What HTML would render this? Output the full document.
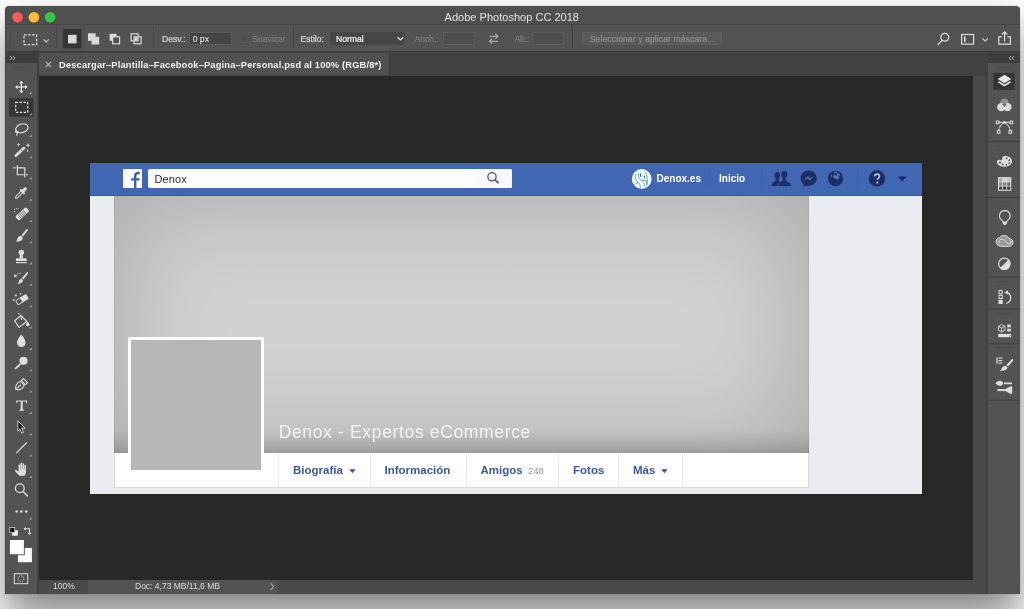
<!DOCTYPE html>
<html><head><meta charset="utf-8">
<style>
*{box-sizing:border-box;margin:0;padding:0}
html,body{width:1024px;height:609px;overflow:hidden}
body{position:relative;background:#fff;font-family:"Liberation Sans",sans-serif;}
.abs{position:absolute}
#win{position:absolute;left:5px;top:6px;width:1015px;height:588px;background:#484848;border-radius:4.5px 4.5px 0 0;box-shadow:0 0 1px rgba(0,0,0,.55),0 23px 40px rgba(0,0,0,.48);overflow:hidden}
#in{position:absolute;left:-5px;top:-6px;width:1024px;height:609px;will-change:transform}
#in2{position:absolute;left:5.5px;top:6px;width:1014px;height:587.5px}
#in2>*{position:absolute}
#title{left:0;top:0;width:100%;height:18px;background:#505050;color:#e2e2e2;font-size:11px;text-align:center;line-height:22.6px;letter-spacing:.02px;text-indent:-1.4px}
#opts{left:0;top:18px;width:100%;height:28px;background:#535353;border-top:1px solid #444;border-bottom:1px solid #3e3e3e}
#tabbar{left:33px;top:46px;width:950px;height:24.3px;background:#414141}
#tab{left:33.5px;top:46.5px;width:350.5px;height:22.7px;background:#515151;border-right:1px solid #3a3a3a;color:#f0f0f0;font-size:9.3px;letter-spacing:.17px;font-weight:bold;line-height:24.8px;white-space:nowrap}
#canvas{left:33px;top:70.3px;width:934.5px;height:503.7px;background:#282828}
#vscroll{left:967.5px;top:70.3px;width:13px;height:517.2px;background:#4a4a4a}
#vsep{left:980.3px;top:46px;width:2.4px;height:542px;background:#414141}
#status{left:33px;top:574px;width:934.5px;height:13.5px;background:#4a4a4a;color:#dadada;font-size:8.5px;line-height:12.8px}
#tools{left:0;top:46px;width:33px;height:542px;background:#535353;border-right:2.3px solid #3f3f3f}
#rpanel{left:982.5px;top:46px;width:32px;height:542px;background:#535353}
.hdr{position:absolute;left:0;top:0;width:100%;height:10.5px;background:#3d3d3d}

#doc{left:84.5px;top:156.5px;width:832px;height:331.5px;background:#e9ebee}
#doc>*{position:absolute}
#fbbar{left:0;top:0;width:100%;height:33.5px;background:#4267b2;border-bottom:1px solid #3b5998}
#fblogo{left:32.9px;top:6.2px;width:19.6px;height:19.4px;background:#fff;border-radius:1px}
#search{left:58px;top:6.3px;width:364px;height:19.5px;background:#fff;border-radius:2px;overflow:hidden;font-size:11px;letter-spacing:.1px;color:#1d2129;line-height:20.9px;padding-left:6.5px}
#sbtn{position:absolute;right:0;top:0;width:37px;height:19.5px;background:#f8f9fa}
#cover{left:24px;top:33.5px;width:695px;height:257px;background:#d1d1d1;box-shadow:inset 0 0 110px rgba(0,0,0,.2),inset 1px 0 0 rgba(0,0,0,.06),inset -1px 0 0 rgba(0,0,0,.06)}
#covshade{left:24px;top:266.5px;width:695px;height:24px;background:linear-gradient(to bottom,rgba(0,0,0,0) 0%,rgba(0,0,0,.035) 30%,rgba(0,0,0,.1) 70%,rgba(0,0,0,.17) 100%)}
#tabs{left:24px;top:290.3px;width:695px;height:35.5px;background:#fff;border:1px solid #d8dade;border-top:none}
#pic{left:37.7px;top:174.2px;width:136.4px;height:137.3px;background:#fff;border-radius:1.5px}
#pic i{position:absolute;left:3.5px;top:3.6px;right:3.2px;bottom:3.6px;background:#b7b7b7}
#name{left:188.7px;top:259.4px;font-size:17.5px;color:rgba(255,255,255,.8);white-space:nowrap;letter-spacing:.65px;font-weight:normal}
.tb{position:absolute;top:290.3px;height:35px;line-height:35.5px;font-size:11.5px;font-weight:bold;color:#3c5894;white-space:nowrap}
.ts{position:absolute;top:290.3px;width:1px;height:35px;background:#e5e6e9}
.nv{position:absolute;top:-.8px;height:33.5px;line-height:33px;font-size:10px;font-weight:bold;color:#fff;white-space:nowrap}

#ov{left:-5.5px;top:-6px;width:1024px;height:609px;pointer-events:none}
#ov>*{position:absolute}
.ot{-webkit-text-stroke-width:.22px;position:absolute;top:32.6px;height:13px;line-height:13px;font-size:8.6px;color:#d6d6d6;white-space:nowrap}
.dim{color:#7d7d7d}
.inp{position:absolute;top:32.4px;height:12.4px;background:#454545;border:1px solid #5d5d5d;border-radius:1px}
.inpd{position:absolute;top:32.4px;height:12.4px;background:#4d4d4d;border:1px solid #5e5e5e;border-radius:1px}
</style></head><body>
<div id="win"><div id="in"><div id="in2">
  <div id="title">Adobe Photoshop CC 2018</div>
  <div id="opts"></div>
  <div id="tabbar"></div>
  <div id="tab"><svg class="abs" style="left:5.500px;top:8px" width="7" height="7" viewBox="0 0 7 7"><path d="M.8.800l5.200 5.200M6 .8l-5.200 5.200" stroke="#b4b4b4" stroke-width="1.100"/></svg><span class="abs" style="left:20px">Descargar–Plantilla–Facebook–Pagina–Personal.psd al 100% (RGB/8*)</span></div>
  <div id="canvas"></div>

  <div id="doc">
    <div id="fbbar"></div>
    <div id="fblogo"><svg width="19.6" height="19.4" viewBox="0 0 19.6 19.4" style="position:absolute;left:0;top:0"><path d="M11 19.400V11.600H8.100V9.200H11V6.900C11 4.200 12.600 2.800 15 2.800C15.800 2.800 16.400 2.900 16.900 3V5.300H15.500C14 5.300 13.400 5.900 13.400 7.200V9.200H16.600L16.300 11.600H13.400V19.400Z" fill="#3d5fa8"/></svg></div>
    <div id="search">Denox<div id="sbtn"><svg width="37" height="19" viewBox="0 0 37 19" style="position:absolute;left:0;top:0"><circle cx="17" cy="7.800" r="4.150" fill="none" stroke="#4b4f56" stroke-width="1.250"/><path d="M20 10.800l3.100 2.900" stroke="#4b4f56" stroke-width="1.600" stroke-linecap="round"/></svg></div></div>
    <div id="cover"></div>
    <div id="covshade"></div>
    <div id="tabs"></div>
    <div id="name">Denox - Expertos eCommerce</div>
    <div id="pic"><i></i></div>
    <div class="ts" style="left:188px"></div>
    <div class="tb" style="left:203px">Biografía</div>
    <div class="ts" style="left:279.5px"></div>
    <div class="tb" style="left:294.5px">Información</div>
    <div class="ts" style="left:375.5px"></div>
    <div class="tb" style="left:390.5px">Amigos <span style="font-weight:normal;font-size:9.5px;color:#90949c;margin-left:2px">248</span></div>
    <div class="ts" style="left:468px"></div>
    <div class="tb" style="left:483px">Fotos</div>
    <div class="ts" style="left:527.5px"></div>
    <div class="tb" style="left:543px">Más</div>
    <div class="ts" style="left:592px"></div>
    <svg class="abs" style="left:259px;top:306.2px" width="7" height="5" viewBox="0 0 7 5"><path d="M.2.300h6.400L3.400 4.200z" fill="#3c5894"/></svg>
    <svg class="abs" style="left:571.3px;top:306.2px" width="7" height="5" viewBox="0 0 7 5"><path d="M.2.300h6.400L3.400 4.200z" fill="#3c5894"/></svg>
    <svg class="abs" style="left:0;top:0" width="832" height="33.5" viewBox="0 0 832 33.5">
      <g stroke="#3d60a8" stroke-width="1"><path d="M619.300 6v17.500M671.600 6v17.500M767.600 6v17.500"/></g>
      <!-- avatar -->
      <circle cx="551.7" cy="16" r="9.900" fill="#f1f9ff"/>
      <g fill="none" stroke="#5b8fc6" stroke-width=".8" stroke-linecap="round">
        <path d="M545.500 11.500c-1 3 0 6 3 8.500c1.500 1.200 2 3 1.800 5.200"/>
        <path d="M548.300 10.500c-.5 3 .8 5.500 3.500 7c2 1.200 2.600 3 2.400 5.500"/>
        <path d="M544 21.500l4.500-2.200"/>
        <path d="M554.500 8.500c2 1.500 3 4 2.600 7.500l.3 5"/>
        <path d="M552.500 17.500h4v5"/>
      </g>
      <path d="M550.200 9.800c-.8 1.600-.5 3.600.9 4.600c.2-1.600.2-3.200-.9-4.600zM554.200 12.300c-.5 1.300-.2 2.800.8 3.600c.3-1.300.1-2.600-.8-3.600z" fill="#1c6f9c"/>
      <!-- friends -->
      <g fill="#1b2f66">
        <ellipse cx="687.2" cy="12.200" rx="2.650" ry="3.100"/>
        <path d="M681.700 23.400C681.700 20.600 682.300 19.300 684.300 18.500C685.500 18 685.600 17.600 685.600 16.900V14H688.900V16.900C688.900 17.600 689.100 18 690.300 18.500L692.500 23.400Z"/>
        <path d="M688.200 23.600C688.200 20.700 688.900 19.300 691 18.500C692.300 18 692.500 17.600 692.500 16.800V14H696V16.800C696 17.600 696.200 18 697.500 18.500C699.800 19.300 701.300 20.700 701.300 23.600Z" stroke="#4267b2" stroke-width=".6"/>
        <ellipse cx="694.2" cy="11.500" rx="2.950" ry="3.450"/>
        <rect x="681" y="23.100" width="21" height="1.200" fill="#4267b2"/>
      </g>
      <!-- messenger -->
      <g>
        <path d="M718.700 7.600c-4.500 0-8.100 3.400-8.100 7.600c0 2.400 1.200 4.500 3 5.900v3l2.800-1.600c.7.200 1.500.3 2.300.3c4.500 0 8.100-3.400 8.100-7.600s-3.600-7.600-8.100-7.600z" fill="#1b2f66"/>
        <path d="M713.600 17.700l4.300-4.600l2.100 2.200l4-2.200l-4.300 4.600l-2.100-2.200z" fill="#4a6fb8"/>
      </g>
      <!-- globe -->
      <circle cx="745.5" cy="15.500" r="7.700" fill="#1b2f66"/>
      <g fill="#5477be">
        <path d="M743.600 9.200l2.200-.6l1.800.5l-1.200.9l-1.600-.1l-.8.700z"/>
        <path d="M746.800 10.600l1.800-.4l1.300 1.200l.2 1.400l-1.500-.5l-1.300.6l-.9-.9z"/>
        <path d="M743.300 12.600l1.600-.6l1.700.8l1.800.2l.9 1.400l-.7 1.600l-1.700.5l-1.100-1l-1.700-.3l-1-1.300z"/>
        <path d="M741.300 11.200l.9.900l-.4 1.400l-1.100.3z"/>
      </g>
      <!-- help -->
      <circle cx="787" cy="15.500" r="8.200" fill="#1b2f66"/>
      <path d="M784.700 13.500c0-1.400 1-2.400 2.400-2.400s2.400.9 2.400 2.200c0 1-.6 1.600-1.300 2.100c-.6.400-.9.800-.9 1.500" fill="none" stroke="#b4c3e4" stroke-width="1.600"/>
      <circle cx="787.300" cy="19.600" r="1.050" fill="#b4c3e4"/>
      <!-- caret -->
      <path d="M807.600 13.400h9.300l-4.650 5.200z" fill="#1b2f66"/>
    </svg>
    <div class="nv" style="left:566.5px">Denox.es</div>
    <div class="nv" style="left:629px">Inicio</div>
  </div>
  <div id="vscroll"></div>
  <div id="vsep"></div>
  <div id="status"><div class="abs" style="left:49.3px;top:0;width:190.7px;height:13.5px;background:#535353"></div><span class="abs" style="left:14.5px">100%</span><span class="abs" style="left:96.5px">Doc: 4,73 MB/11,6 MB</span></div>
  <div id="tools"><div class="hdr"></div></div>
  <div id="rpanel"><div class="hdr"></div></div>
  <div id="ov">
    <svg style="left:0;top:0" width="60" height="609" viewBox="0 0 60 609">
      <!-- traffic lights -->
      <circle cx="17.6" cy="17.200" r="5.300" fill="#fc5b57"/><circle cx="33.900" cy="17.200" r="5.300" fill="#fdbc40"/><circle cx="50.200" cy="17.200" r="5.300" fill="#34c84a"/>
      <path d="M10 56l2.100 2.100l-2.100 2.100M12.900 56l2.100 2.100l-2.100 2.100" fill="none" stroke="#c8c8c8" stroke-width=".85"/>
      <path d="M13 67.200h16.500" stroke="#494949" stroke-width="1.600" stroke-dasharray="1 1"/>
      <!-- move -->
      <g transform="translate(21.300 87)" fill="#dedede" stroke="none">
        <rect x="-.7" y="-4.500" width="1.400" height="9"/><rect x="-4.500" y="-.7" width="9" height="1.400"/>
        <path d="M0 -6.300l2.300 2.500h-4.600zM0 6.300l2.300-2.500h-4.600zM-6.300 0l2.500-2.300v4.600zM6.300 0l-2.500-2.300v4.600z"/>
      </g><path d="M31.600 91.7v2.300h-2.300z" fill="#b5b5b5"/>
      <!-- marquee (selected) -->
      <rect x="9.100" y="98.200" width="24.300" height="18.500" fill="#363636"/>
      <rect x="15.700" y="102.400" width="12" height="9.900" fill="none" stroke="#dedede" stroke-width="1.200" stroke-dasharray="2.500 1.400"/><path d="M31.600 113.0v2.300h-2.300z" fill="#b5b5b5"/>
      <!-- lasso -->
      <g fill="none" stroke="#dedede" stroke-width="1.150">
        <ellipse cx="21.900" cy="128.300" rx="6.300" ry="4.300" transform="rotate(-18 21.900 128.300)"/>
        <path d="M16.300 130.500c-1 .6-.9 2 .3 2.200c1.200.2 1.800-.9 1.100-1.700M17 132.700c.3 1 .2 2-.4 3"/>
      </g><path d="M31.600 134.7v2.300h-2.300z" fill="#b5b5b5"/>
      <!-- magic wand -->
      <g>
        <path d="M16 155.600l8-7.500" stroke="#dedede" stroke-width="2.700" stroke-linecap="round"/>
        <path d="M20.900 149.400l1.900 2" stroke="#5a5a5a" stroke-width=".8"/>
        <g fill="#dedede"><path d="M28 143.0l0.644 1.6559999999999997l1.6559999999999997 0.644l-1.6559999999999997 0.644l-0.644 1.6559999999999997l-0.644 -1.6559999999999997l-1.6559999999999997 -0.644l1.6559999999999997 -0.644z"/><path d="M18.6 142.79999999999998l0.5040000000000001 1.2959999999999998l1.2959999999999998 0.5040000000000001l-1.2959999999999998 0.5040000000000001l-0.5040000000000001 1.2959999999999998l-0.5040000000000001 -1.2959999999999998l-1.2959999999999998 -0.5040000000000001l1.2959999999999998 -0.5040000000000001z"/><path d="M27.6 149.3l0.42000000000000004 1.08l1.08 0.42000000000000004l-1.08 0.42000000000000004l-0.42000000000000004 1.08l-0.42000000000000004 -1.08l-1.08 -0.42000000000000004l1.08 -0.42000000000000004z"/></g>
      </g><path d="M31.600 156.0v2.300h-2.300z" fill="#b5b5b5"/>
      <!-- crop -->
      <g fill="none" stroke="#dedede" stroke-width="1.150"><path d="M17.300 165.200v9.500h7.500M25.900 174.700h2.200"/><path d="M13.200 167.900h2.300M16.700 167.900h8.100v9.500"/></g><path d="M31.600 177.0v2.300h-2.300z" fill="#b5b5b5"/>
      <!-- eyedropper -->
      <g>
        <path d="M15.600 198.300l.3-2l5.300-5.300l1.700 1.700l-5.300 5.300z" fill="none" stroke="#dedede" stroke-width="1.050" stroke-linejoin="round"/>
        <path d="M20.600 189.800l3.600 3.600" stroke="#dedede" stroke-width="1.800" stroke-linecap="round"/>
        <path d="M23 191.200l2.300-2.300" stroke="#dedede" stroke-width="3.200" stroke-linecap="round"/>
      </g><path d="M31.600 198.5v2.300h-2.300z" fill="#b5b5b5"/>
      <!-- healing brush -->
      <g>
        <g transform="rotate(-42 22.200 213.800)"><rect x="15" y="211" width="14.400" height="5.600" rx="1.600" fill="#dedede"/><path d="M18.600 211v5.600M20.300 211v5.600M22 211v5.600M23.700 211v5.600M25.400 211v5.600" stroke="#555" stroke-width=".7"/></g>
        <path d="M14.600 212.300v-2.800c0-.6.300-.9.900-.9h3.300" fill="none" stroke="#dedede" stroke-width=".9" stroke-dasharray="1.300 1"/>
      </g><path d="M31.600 219.7v2.300h-2.300z" fill="#b5b5b5"/>
      <!-- brush -->
      <g fill="#dedede">
        <path d="M27.500 228.900c.5.400.5 1 .1 1.500l-4.600 6.100l-1.600-1.300l5-5.900c.4-.5.700-.7 1.100-.4z"/>
        <path d="M20.800 235.800l1.700 1.400c.6 1.600-.3 3-2 3.700c-1.400.6-2.900.7-4.600.7c1-1 1.100-1.900 1.600-3.100c.6-1.500 1.800-2.500 3.300-2.700z"/>
      </g><path d="M31.600 241.0v2.300h-2.300z" fill="#b5b5b5"/>
      <!-- stamp -->
      <g fill="#dedede">
        <circle cx="21.300" cy="252.500" r="2.750"/>
        <path d="M20.100 254.500h2.400l.7 3.800h-3.800z"/>
        <path d="M16.900 258.200h8.800c.6 0 1 .4 1 1v1.700h-10.800v-1.700c0-.6.400-1 1-1z"/>
        <rect x="15.900" y="262" width="10.800" height="1.200"/>
      </g><path d="M31.600 262.3v2.300h-2.300z" fill="#b5b5b5"/>
      <!-- history brush -->
      <g>
        <g fill="#dedede"><path d="M27.800 272.100c.5.400.4 1 0 1.500l-4.300 5.800l-1.600-1.300l4.800-5.700c.4-.4.700-.6 1.100-.3z"/><path d="M21.200 278.800l1.700 1.400c0 1.700-1.500 3.300-5.300 3.900c1.300-1.300 1-2.300 1.500-3.500c.4-.9 1.100-1.600 2.100-1.800z"/></g>
        <path d="M16.800 275c1.100-1.300 2.500-1.900 4.300-1.700" fill="none" stroke="#dedede" stroke-width=".9" stroke-dasharray="1.200 .9"/><path d="M14 277.400l.6-3.300l2.800 1.900z" fill="#dedede"/>
      </g><path d="M31.600 283.5v2.300h-2.300z" fill="#b5b5b5"/>
      <!-- eraser w/ sparkles -->
      <g>
        <g transform="rotate(-32 22 299.600)"><rect x="15.600" y="296.800" width="12.800" height="5.600" rx=".8" fill="#dedede"/><rect x="16.400" y="297.600" width="4.600" height="4" fill="#535353"/></g>
        <g fill="#dedede"><path d="M15.9 293.8l0.47600000000000003 1.224l1.224 0.47600000000000003l-1.224 0.47600000000000003l-0.47600000000000003 1.224l-0.47600000000000003 -1.224l-1.224 -0.47600000000000003l1.224 -0.47600000000000003z"/><path d="M20.4 292.40000000000003l0.392 1.008l1.008 0.392l-1.008 0.392l-0.392 1.008l-0.392 -1.008l-1.008 -0.392l1.008 -0.392z"/><path d="M13.8 298.6l0.392 1.008l1.008 0.392l-1.008 0.392l-0.392 1.008l-0.392 -1.008l-1.008 -0.392l1.008 -0.392z"/></g>
      </g><path d="M31.600 304.9v2.300h-2.300z" fill="#b5b5b5"/>
      <!-- paint bucket -->
      <g>
        <path d="M14.600 320.800l6.300-5.300l6 5.800l-7.800 6.100z" fill="none" stroke="#dedede" stroke-width="1.150" stroke-linejoin="round"/>
        <path d="M17.800 313.800c1.200-.5 2.300.2 2.800 1.500l.9 4" fill="none" stroke="#dedede" stroke-width="1"/>
        <path d="M27.600 321.500c1.300 1.600 1.900 2.500 1.900 3.300a1.700 1.700 0 0 1-3.400 0c0-.9.500-1.900 1.500-3.300z" fill="#dedede"/>
        <circle cx="21.500" cy="319.500" r=".8" fill="#dedede"/>
      </g><path d="M31.600 326.3v2.300h-2.300z" fill="#b5b5b5"/>
      <!-- blur drop -->
      <path d="M21.300 334.400c2.700 3.300 4.300 5.900 4.300 8.400a4.300 4.300 0 0 1-8.600 0c0-2.500 1.600-5.100 4.300-8.400z" fill="#dedede"/><path d="M31.600 347.7v2.300h-2.300z" fill="#b5b5b5"/>
      <!-- dodge -->
      <g><circle cx="23.500" cy="360.800" r="4.050" fill="#dedede"/><path d="M20.600 363.900l-4.900 4.500" stroke="#dedede" stroke-width="1.900" stroke-linecap="round"/><path d="M19.800 363.400l1.400 1.500" stroke="#666" stroke-width=".6"/></g><path d="M31.600 369.0v2.300h-2.300z" fill="#b5b5b5"/>
      <!-- pen -->
      <g transform="translate(15.800 389.600) rotate(-43)" fill="none" stroke="#dedede" stroke-width="1.050" stroke-linejoin="round">
        <path d="M0 0C2.200-3.400 6-3.900 9.200-2.700V2.700C6 3.900 2.200 3.400 0 0Z"/>
        <path d="M.5 0H5.300"/><circle cx="6.100" cy="0" r=".9" fill="#dedede" stroke="none"/>
        <rect x="10.300" y="-2.900" width="3" height="5.800" rx=".5"/>
      </g><path d="M31.600 390.3v2.300h-2.300z" fill="#b5b5b5"/>
      <!-- type -->
      <path d="M16.300 400.400h10.800v2.900h-.8c-.2-1.400-.7-1.800-1.900-1.800h-1.700v7.300c0 .8.300 1.100 1.600 1.100v.8h-5.200v-.8c1.300 0 1.600-.3 1.600-1.100v-7.300h-1.700c-1.200 0-1.700.4-1.900 1.800h-.8z" fill="#dedede"/><path d="M31.600 411.7v2.300h-2.300z" fill="#b5b5b5"/>
      <!-- path selection -->
      <path d="M17.800 420.800l7.400 7.300h-3.600l2 4.200l-1.800.8l-2-4.200l-2 2.300z" fill="#1a1a1a" stroke="#dedede" stroke-width=".9" stroke-linejoin="round"/><path d="M31.600 433.0v2.300h-2.300z" fill="#b5b5b5"/>
      <!-- line -->
      <path d="M16.300 453l10.500-10.500" stroke="#dedede" stroke-width="1.100"/><path d="M31.600 454.3v2.300h-2.300z" fill="#b5b5b5"/>
      <!-- hand -->
      <g transform="translate(21.500 0) scale(1.180 1) translate(-21.100 -.5)"><path d="M19.300 476.300c-1.300-1.800-2.500-3.300-3.500-4.400c-.6-.7.300-1.700 1.100-1.100l1.700 1.500v-6.800c0-.9 1.300-.9 1.300 0v4.400h.3v-6.200c0-.9 1.400-.9 1.400 0v6.200h.3v-5.500c0-.9 1.400-.9 1.400 0v5.600h.3v-4c0-.9 1.300-.9 1.300 0v6.300c0 1.800-.5 2.800-1.200 4z" fill="#dedede"/></g><path d="M31.600 475.7v2.300h-2.300z" fill="#b5b5b5"/>
      <!-- zoom -->
      <g fill="none" stroke="#dedede" stroke-width="1.300"><circle cx="19.800" cy="488.200" r="4.400"/><path d="M23 491.500l4.500 4.500" stroke-linecap="round" stroke-width="1.500"/></g>
      <!-- dots -->
      <g fill="#dedede"><circle cx="16.600" cy="511.500" r="1.250"/><circle cx="21.400" cy="511.500" r="1.250"/><circle cx="26.200" cy="511.500" r="1.250"/></g><path d="M31.600 517.2v2.300h-2.300z" fill="#b5b5b5"/>
      <!-- default colors / swap -->
      <rect x="12.600" y="530.300" width="5" height="5" fill="#f0f0f0" stroke="#f0f0f0" stroke-width=".6"/><rect x="9.800" y="527.500" width="5" height="5" fill="#111" stroke="#e8e8e8" stroke-width=".7"/>
      <g fill="none" stroke="#dedede" stroke-width="1.100"><path d="M25.300 528.800h4.200v4.400"/></g><path d="M25.800 526.800l-2.300 2l2.300 2zM27.500 532.700l2 2.400l2-2.400z" fill="#dedede"/>
      <!-- fg/bg -->
      <rect x="17.600" y="547.700" width="14.600" height="15" fill="#fff" stroke="#3c3c3c" stroke-width=".6"/>
      <rect x="9.300" y="539.600" width="15" height="15.200" fill="#fff" stroke="#3c3c3c" stroke-width=".8"/>
      <!-- quick mask -->
      <rect x="14.300" y="573.700" width="13.400" height="10" fill="none" stroke="#dedede" stroke-width="1"/><circle cx="21" cy="578.700" r="2.900" fill="none" stroke="#dedede" stroke-width=".9" stroke-dasharray="1.300 .9"/>
    </svg>
    <svg style="left:0;top:24px" width="1024" height="28" viewBox="0 24 1024 28">
      <g stroke="#464646" stroke-width="1"><path d="M56.500 27v21M153.500 27v21M293.500 27v21"/></g><path d="M572.500 26v22" stroke="#3a3a3a" stroke-width="1"/>
      <path d="M10.500 29v18" stroke="#484848" stroke-width="1"/>
      <!-- marquee tool -->
      <rect x="24" y="34.800" width="12.600" height="9.800" fill="none" stroke="#dcdcdc" stroke-width="1.200" stroke-dasharray="2.600 1.500"/>
      <path d="M43.500 39.300l2.700 2.600l2.700-2.600" fill="none" stroke="#d0d0d0" stroke-width="1.100"/>
      <!-- new selection (active) -->
      <rect x="62.900" y="28.900" width="18.700" height="19.500" fill="#353535"/>
      <rect x="68" y="34.800" width="8.600" height="8.600" fill="#dadada"/>
      <!-- add -->
      <rect x="88" y="33.300" width="7.600" height="7.600" fill="#dadada"/><rect x="91.500" y="36.800" width="7.700" height="7.700" fill="#dadada"/>
      <!-- subtract -->
      <rect x="109.600" y="33.800" width="7" height="7" fill="#dadada"/><rect x="112.600" y="36.800" width="7" height="7" fill="#535353" stroke="#dadada" stroke-width="1.200"/>
      <!-- intersect -->
      <rect x="131.100" y="33.800" width="7" height="7" fill="none" stroke="#dadada" stroke-width="1.200"/><rect x="134.100" y="36.800" width="7" height="7" fill="none" stroke="#dadada" stroke-width="1.200"/><rect x="134.700" y="37.400" width="2.800" height="2.800" fill="#dadada"/>
      <!-- checkbox disabled -->
      <rect x="240.800" y="36.200" width="6.200" height="6.200" fill="#4c4c4c" stroke="#5c5c5c" stroke-width=".8"/>
      <!-- swap arrows -->
      <g fill="none" stroke="#a8a8a8" stroke-width="1.200"><path d="M489.500 36.300h8.500M495.300 33.800l2.700 2.500l-2.700 2.500"/><path d="M498 41.300h-8.500M492.200 38.800l-2.700 2.500l2.700 2.500"/></g>
      <!-- right icons -->
      <g fill="none" stroke="#dcdcdc" stroke-width="1.300"><circle cx="944.800" cy="37.300" r="3.900"/><path d="M942.200 40.300l-4.200 4.200" stroke-linecap="round"/></g>
      <rect x="961.600" y="34.500" width="12" height="9.600" fill="none" stroke="#dcdcdc" stroke-width="1.200"/><path d="M964.800 36.500v5.500" stroke="#dcdcdc" stroke-width="1.600"/>
      <path d="M982.500 38.500l2.700 2.600l2.700-2.600" fill="none" stroke="#d0d0d0" stroke-width="1.100"/>
      <g fill="none" stroke="#dcdcdc" stroke-width="1.200"><path d="M1001.800 36.800h-3v7.400h11.600v-7.400h-3"/><path d="M1004.600 41.500v-9.500M1002 34.500l2.600-2.700l2.600 2.700"/></g>
    </svg>
    <svg style="left:984px;top:50px" width="40" height="360" viewBox="984 50 40 360">
      <path d="M1011.100 56l-2.100 2.100l2.100 2.100M1014.100 56l-2.100 2.100l2.100 2.100" fill="none" stroke="#c8c8c8" stroke-width=".85"/>
      <path d="M996 67h15.500" stroke="#4a4a4a" stroke-width="1.800" stroke-dasharray="1 1"/>
      <!-- layers -->
      <rect x="993.200" y="72.900" width="21.500" height="17" fill="#353535"/>
      <path d="M1004.500 74.800l6.900 4.200l-6.900 4.200l-6.900-4.200z" fill="#e6e6e6"/>
      <path d="M997.600 82.300l1.700-1l5.200 3.200l5.200-3.200l1.700 1l-6.900 4.300z" fill="#e6e6e6"/>
      <!-- channels -->
      <circle cx="1004.400" cy="102.600" r="4.200" fill="#8e8e8e"/>
      <circle cx="1001.300" cy="107.100" r="4.200" fill="#d9d9d9"/><circle cx="1007.500" cy="107.100" r="4.200" fill="#d9d9d9"/>
      <path d="M1004.400 104.300a4.200 4.200 0 0 1 0 5.600a4.200 4.200 0 0 1 0-5.600z" fill="#f4f4f4"/>
      <path d="M1002.300 104.200l2.100-1l2.100 1l-2.100 3.300z" fill="#6a6a6a"/>
      <!-- paths -->
      <g fill="none" stroke="#dedede" stroke-width="1"><path d="M997.300 122.400h14.400"/><path d="M998.600 131.300c.5-4 2.300-7 5.900-8.900c3.600 1.900 5.400 4.900 5.900 8.900"/></g>
      <g fill="#535353" stroke="#dedede" stroke-width="1"><rect x="996.300" y="121.100" width="2.600" height="2.600"/><rect x="1010.100" y="121.100" width="2.600" height="2.600"/><rect x="997.300" y="130.600" width="2.700" height="2.700"/><rect x="1009" y="130.600" width="2.700" height="2.700"/></g>
      <rect x="1003.300" y="121.200" width="2.400" height="2.400" fill="#dedede"/>
      <path d="M988.500 141.3h31" stroke="#3f3f3f" stroke-width="1.200"/><path d="M996 146.2h15.500" stroke="#4a4a4a" stroke-width="1.800" stroke-dasharray="1 1"/>
      <!-- palette -->
      <path d="M1005 156c4 0 7 2.200 7 5.300c0 3.200-3.200 5.500-7.300 5.500c-4.300 0-7.700-1.800-7.700-4.800c0-1.500 1-2.300 2.200-2.300c1.300 0 1.700.8 2.600.4c.9-.4.300-1.500.6-2.500c.3-1 1.200-1.600 2.600-1.600z" fill="#dedede"/>
      <g fill="#535353"><circle cx="1006.600" cy="158.300" r=".9"/><circle cx="1009.300" cy="160.200" r=".9"/><circle cx="1009.300" cy="163.200" r=".9"/><circle cx="1006.300" cy="164.800" r=".9"/><circle cx="1002.800" cy="164.500" r=".9"/><circle cx="1000" cy="162.600" r="1.100"/></g>
      <!-- swatches -->
      <rect x="998" y="177.200" width="13.300" height="13.600" fill="#e2e2e2"/>
      <g><rect x="999.100" y="178.300" width="3.200" height="3.300" fill="#a8a8a8"/><rect x="1003.100" y="178.300" width="3.200" height="3.300" fill="#d0d0d0"/><rect x="1007.100" y="178.300" width="3.200" height="3.300" fill="#bdbdbd"/>
      <rect x="999.100" y="182.400" width="3.200" height="3.300" fill="#8a8a8a"/><rect x="1003.100" y="182.400" width="3.200" height="3.300" fill="#7a7a7a"/><rect x="1007.100" y="182.400" width="3.200" height="3.300" fill="#6e6e6e"/>
      <rect x="999.100" y="186.500" width="3.200" height="3.300" fill="#4a4a4a"/><rect x="1003.100" y="186.500" width="3.200" height="3.300" fill="#3c3c3c"/><rect x="1007.100" y="186.500" width="3.200" height="3.300" fill="#444"/></g>
      <path d="M988.500 197.4h31" stroke="#3f3f3f" stroke-width="1.200"/><path d="M996 202.3h15.500" stroke="#4a4a4a" stroke-width="1.800" stroke-dasharray="1 1"/>
      <!-- bulb -->
      <path d="M1004.800 210.600a5.200 5.200 0 0 1 3 9.500c-.7.500-1 1-1 1.900h-4c0-.9-.3-1.400-1-1.900a5.200 5.200 0 0 1 3-9.500z" fill="none" stroke="#dedede" stroke-width="1.100"/>
      <path d="M1002.900 222h3.800v1.600l-1.100 1.400h-1.600l-1.100-1.400z" fill="#dedede"/>
      <!-- cc -->
      <path d="M1001.500 246.400c-3.100 0-5.400-2-5.400-4.700c0-2.200 1.500-3.800 3.600-4.300c1-1.300 2.500-2 4.300-2c2.300 0 4.200 1.200 5 3.100c2.300.3 4 1.900 4 4c0 2.200-1.900 3.900-4.400 3.900z" fill="#9a9a9a" stroke="#dedede" stroke-width="1"/>
      <path d="M1000 243.600c-1.300-1-1.300-2.900 0-3.800c1.500-1.100 3.300-.5 4.700.8l2.800 2.600c1 .9 2.300.9 3 0c.7-.9.500-2.200-.5-2.800" fill="none" stroke="#dedede" stroke-width="1"/>
      <!-- adjustments -->
      <circle cx="1004.300" cy="263.800" r="5.700" fill="#555" stroke="#dedede" stroke-width="1.200"/>
      <path d="M1008.700 259.400a6.200 6.200 0 0 1-8.800 8.800z" fill="#dedede"/>
      <path d="M988.500 277h31" stroke="#3f3f3f" stroke-width="1.200"/><path d="M996 282h15.500" stroke="#4a4a4a" stroke-width="1.800" stroke-dasharray="1 1"/>
      <!-- history -->
      <g fill="none" stroke="#dedede" stroke-width="1"><rect x="999" y="290.500" width="3.200" height="3.200"/><rect x="999" y="295.300" width="3.200" height="3.200"/></g><rect x="998.500" y="299.800" width="4.200" height="4.200" fill="#dedede"/>
      <path d="M1006.300 303.500c3.500-1.200 4.800-4.300 4.200-7.300c-.4-2-1.700-3.300-3.300-3.800" fill="none" stroke="#dedede" stroke-width="1.300"/><path d="M1004.300 292.700l3.500-2.400l.5 4.200z" fill="#dedede"/>
      <path d="M988.500 309h31" stroke="#3f3f3f" stroke-width="1.200"/><path d="M996 313.7h15.500" stroke="#4a4a4a" stroke-width="1.800" stroke-dasharray="1 1"/>
      <!-- properties -->
      <g fill="none" stroke="#dedede" stroke-width=".9" stroke-linejoin="round"><path d="M1001.700 324.600l3.300 1.700v3.900l-3.300 1.800l-3.300-1.800v-3.900z"/><path d="M998.400 326.300l3.300 1.800l3.300-1.800M1001.700 328.100v3.900"/></g>
      <rect x="1007.200" y="324.500" width="3.600" height="2.800" fill="#dedede"/><rect x="1007.200" y="328.700" width="3.600" height="2.800" fill="#dedede"/>
      <rect x="998.200" y="333.900" width="13" height="3.300" fill="#dedede"/><path d="M1009.500 334.700l.9.900l-.9.900" fill="none" stroke="#535353" stroke-width=".6"/>
      <path d="M988.500 343.8h31" stroke="#3f3f3f" stroke-width="1.200"/><path d="M996 348.2h15.500" stroke="#4a4a4a" stroke-width="1.800" stroke-dasharray="1 1"/>
      <!-- brush settings -->
      <g fill="#dedede"><path d="M1012.900 359.200c.5.400.5 1 .1 1.500l-4.900 5.800l-1.800-1.500l5.300-5.600c.4-.4.900-.5 1.300-.2z"/><path d="M1005.600 365.700l1.900 1.600c-.2 2.300-2.700 4-7.700 3.400c1.400-.9 1.600-2 2.500-3.200c.8-1.100 1.900-1.800 3.300-1.800z"/>
      <rect x="996.400" y="357.400" width="1.200" height="6.300"/><rect x="998.500" y="357.500" width="3.800" height="1.100"/><rect x="998.500" y="360" width="3.800" height="1.100"/><rect x="998.500" y="362.500" width="3.800" height="1.100"/></g>
      <!-- brushes -->
      <g fill="#dedede"><path d="M995.300 383.300c1.600-1.800 3.500-2.700 5.500-2.400c1.400.2 2.300 1.100 2.300 2.400s-.9 2.200-2.300 2.400c-2 .3-3.900-.6-5.500-2.400z"/><rect x="1004" y="382.500" width="8.100" height="1.700"/>
      <rect x="997.400" y="389.100" width="8.300" height="2"/><path d="M1005.600 389l4.600-2.600c1.300-.5 2 .2 2 1.200v5c0 1-.7 1.700-2 1.200l-4.600-2.600z"/></g>
      <path d="M988.500 400.2h31" stroke="#3f3f3f" stroke-width="1.200"/>
    </svg>
    <svg style="left:268px;top:581px" width="8" height="11" viewBox="0 0 8 11"><path d="M2.800 2.300l2.600 3.300l-2.600 3.300" fill="none" stroke="#cfcfcf" stroke-width="1"/></svg>
    <span class="ot" style="left:162px">Desv.:</span>
    <div class="inp" style="left:189.400px;width:43px"></div>
    <span class="ot" style="left:192.700px">0 px</span>
    <span class="ot dim" style="left:252.300px">Suavizar</span>
    <span class="ot" style="left:300.500px">Estilo:</span>
    <div class="inp" style="left:329.500px;width:75.700px;top:31.800px;height:13.600px;border-color:#4a4a4a"></div>
    <svg style="left:396px;top:34px" width="9" height="9" viewBox="0 0 9 9"><path d="M1.500 3.200l2.900 2.700l2.900-2.700" fill="none" stroke="#e0e0e0" stroke-width="1.200"/></svg>
    <span class="ot" style="left:336px;color:#f0f0f0">Normal</span>
    <span class="ot dim" style="left:414.400px">Anch.:</span>
    <div class="inpd" style="left:442.500px;width:32px"></div>
    <span class="ot dim" style="left:514.400px">Alt.:</span>
    <div class="inpd" style="left:532.300px;width:32.100px"></div>
    <div class="inpd" style="left:582.300px;width:140.100px;top:31.800px;height:13.500px;background:#595959;border-color:#606060;border-radius:2px"></div>
    <span class="ot" style="left:589.800px;color:#8f8f8f;letter-spacing:.09px">Seleccionar y aplicar máscara...</span>
  </div>
</div></div></div>
</body></html>
